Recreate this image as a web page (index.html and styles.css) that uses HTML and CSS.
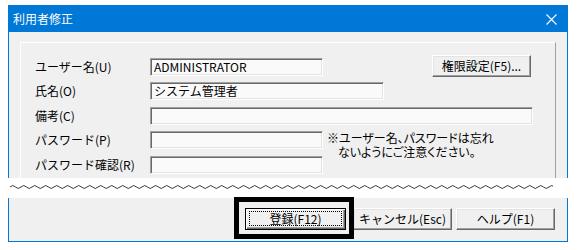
FILE: index.html
```html
<!DOCTYPE html>
<html lang="ja">
<head>
<meta charset="utf-8">
<title>利用者修正</title>
<link rel="stylesheet" href="styles.css">
</head>
<body>
<div class="win-top">
  <div class="titlebar">
    <span class="title">利用者修正</span>
    <svg class="close" width="11" height="11" viewBox="0 0 11 11"><path d="M0.5 0.5 L10.5 10.5 M10.5 0.5 L0.5 10.5" stroke="#fff" stroke-width="1.1" fill="none"/></svg>
  </div>
  <div class="client">
    <div class="frame">
      <div class="row">
        <span class="lbl">ユーザー名(U)</span>
        <div class="field w-short">ADMINISTRATOR</div>
        <button class="btn btn-perm">権限設定(F5)...</button>
      </div>
      <div class="row">
        <span class="lbl">氏名(O)</span>
        <div class="field w-mid">システム管理者</div>
      </div>
      <div class="row">
        <span class="lbl">備考(C)</span>
        <div class="field w-long"></div>
      </div>
      <div class="pw-group">
        <div class="pw-fields">
          <div class="row">
            <span class="lbl">パスワード(P)</span>
            <div class="field w-short"></div>
          </div>
          <div class="row">
            <span class="lbl">パスワード確認(R)</span>
            <div class="field w-short"></div>
          </div>
        </div>
        <p class="note">※ユーザー名、パスワードは忘れ<br>ないようにご注意ください。</p>
      </div>
    </div>
  </div>
</div>
<div class="wave">
  <svg width="543" height="20" viewBox="0 0 543 20">
    <defs>
      <pattern id="wv" width="11" height="20" patternUnits="userSpaceOnUse">
        <path d="M0 9 Q2.75 6 5.5 9 T11 9" fill="none" stroke="#222" stroke-width="0.9"/>
      </pattern>
    </defs>
    <rect x="0" y="0" width="543" height="20" fill="url(#wv)"/>
  </svg>
</div>
<div class="win-bottom">
  <div class="default-wrap">
    <button class="btn btn-default">登録(F12)</button>
    <div class="highlight"></div>
  </div>
  <button class="btn btn-cancel">キャンセル(Esc)</button>
  <button class="btn btn-help">ヘルプ(F1)</button>
</div>
</body>
</html>
```
FILE: styles.css
```css
* { box-sizing: border-box; }
html, body { margin: 0; padding: 0; }
body {
  width: 579px;
  height: 250px;
  overflow: hidden;
  background: #fff;
  font-family: "Noto Sans CJK JP", "Noto Sans", sans-serif;
  font-size: 12px;
  color: #000;
}
.win-top {
  margin: 5px 0 0 8px;
  width: 560px;
  height: 173px;
  border: 1px solid #0078d7;
  border-bottom: 0;
  background: #f0f0f0;
  overflow: hidden;
}
.titlebar {
  height: 26px;
  background: #0078d7;
  color: #fff;
  display: flex;
  align-items: center;
  justify-content: space-between;
  padding: 0 10px 0 4px;
}
.title { font-size: 12px; line-height: 26px; }
.close { display: block; }
.client { padding: 10px 11px 0 11px; }
.frame {
  height: 200px;
  border-top: 1px solid #fff;
  border-left: 1px solid #fff;
  border-right: 1px solid #a0a0a0;
  padding: 14.5px 24px 0 14px;
  display: flex;
  flex-direction: column;
  gap: 6.5px;
}
.row {
  display: flex;
  align-items: center;
  height: 18px;
}
.lbl {
  width: 115px;
  flex: none;
  line-height: 18px;
  white-space: nowrap;
}
.field {
  height: 18px;
  flex: none;
  border-top: 1px solid #a0a0a0;
  border-left: 1px solid #a0a0a0;
  border-right: 1px solid #fff;
  border-bottom: 1px solid #fff;
  box-shadow: inset 1px 1px 0 #696969, inset -1px -1px 0 #e3e3e3;
  background: #fafafa;
  padding-left: 3px;
  line-height: 16px;
  white-space: nowrap;
}
.w-short { width: 173px; }
.w-mid { width: 234px; }
.w-long { width: 383px; }
.btn {
  height: 22px;
  padding: 0;
  margin: 0;
  background: #f0f0f0;
  border-top: 1px solid #fff;
  border-left: 1px solid #fff;
  border-right: 1px solid #696969;
  border-bottom: 1px solid #696969;
  box-shadow: inset -1px -1px 0 #a0a0a0, inset 1px 1px 0 #e3e3e3;
  font-family: inherit;
  font-size: 12px;
  color: #000;
  line-height: 20px;
  text-align: center;
  white-space: nowrap;
}
.btn-perm {
  width: 99px;
  margin-left: auto;
  margin-top: -3px;
  margin-bottom: -1px;
}
.pw-group {
  display: flex;
  align-items: flex-start;
}
.pw-fields {
  display: flex;
  flex-direction: column;
  gap: 6.5px;
}
.note {
  margin: 0 0 0 4px;
  line-height: 14px;
  padding-left: 11px;
  text-indent: -11px;
  white-space: nowrap;
  font-feature-settings: "palt";
}
.wave {
  height: 20px;
  padding-left: 10px;
  background: #fff;
}
.wave svg { display: block; }
.win-bottom {
  margin-left: 8px;
  width: 560px;
  height: 44px;
  border: 1px solid #0078d7;
  border-top: 0;
  background: #f0f0f0;
  display: flex;
  justify-content: flex-end;
  align-items: flex-start;
  padding: 10px 12px 0 0;
}
.default-wrap {
  position: relative;
  margin-right: 7px;
}
.btn-default {
  display: block;
  width: 101px;
  position: relative;
  border: 1px solid #000;
  box-shadow: inset 1px 1px 0 #fff, inset -1px -1px 0 #696969, inset -2px -2px 0 #a0a0a0;
}
.btn-default::after {
  content: "";
  position: absolute;
  left: 3px;
  right: 3px;
  top: 2px;
  bottom: 3px;
  border: 1px dotted #000;
}
.highlight {
  position: absolute;
  left: -11px;
  top: -11px;
  width: 120px;
  height: 42px;
  border: 5px solid #000;
  pointer-events: none;
}
.btn-cancel { width: 99px; margin-right: 4px; }
.btn-help { width: 99px; }
```
